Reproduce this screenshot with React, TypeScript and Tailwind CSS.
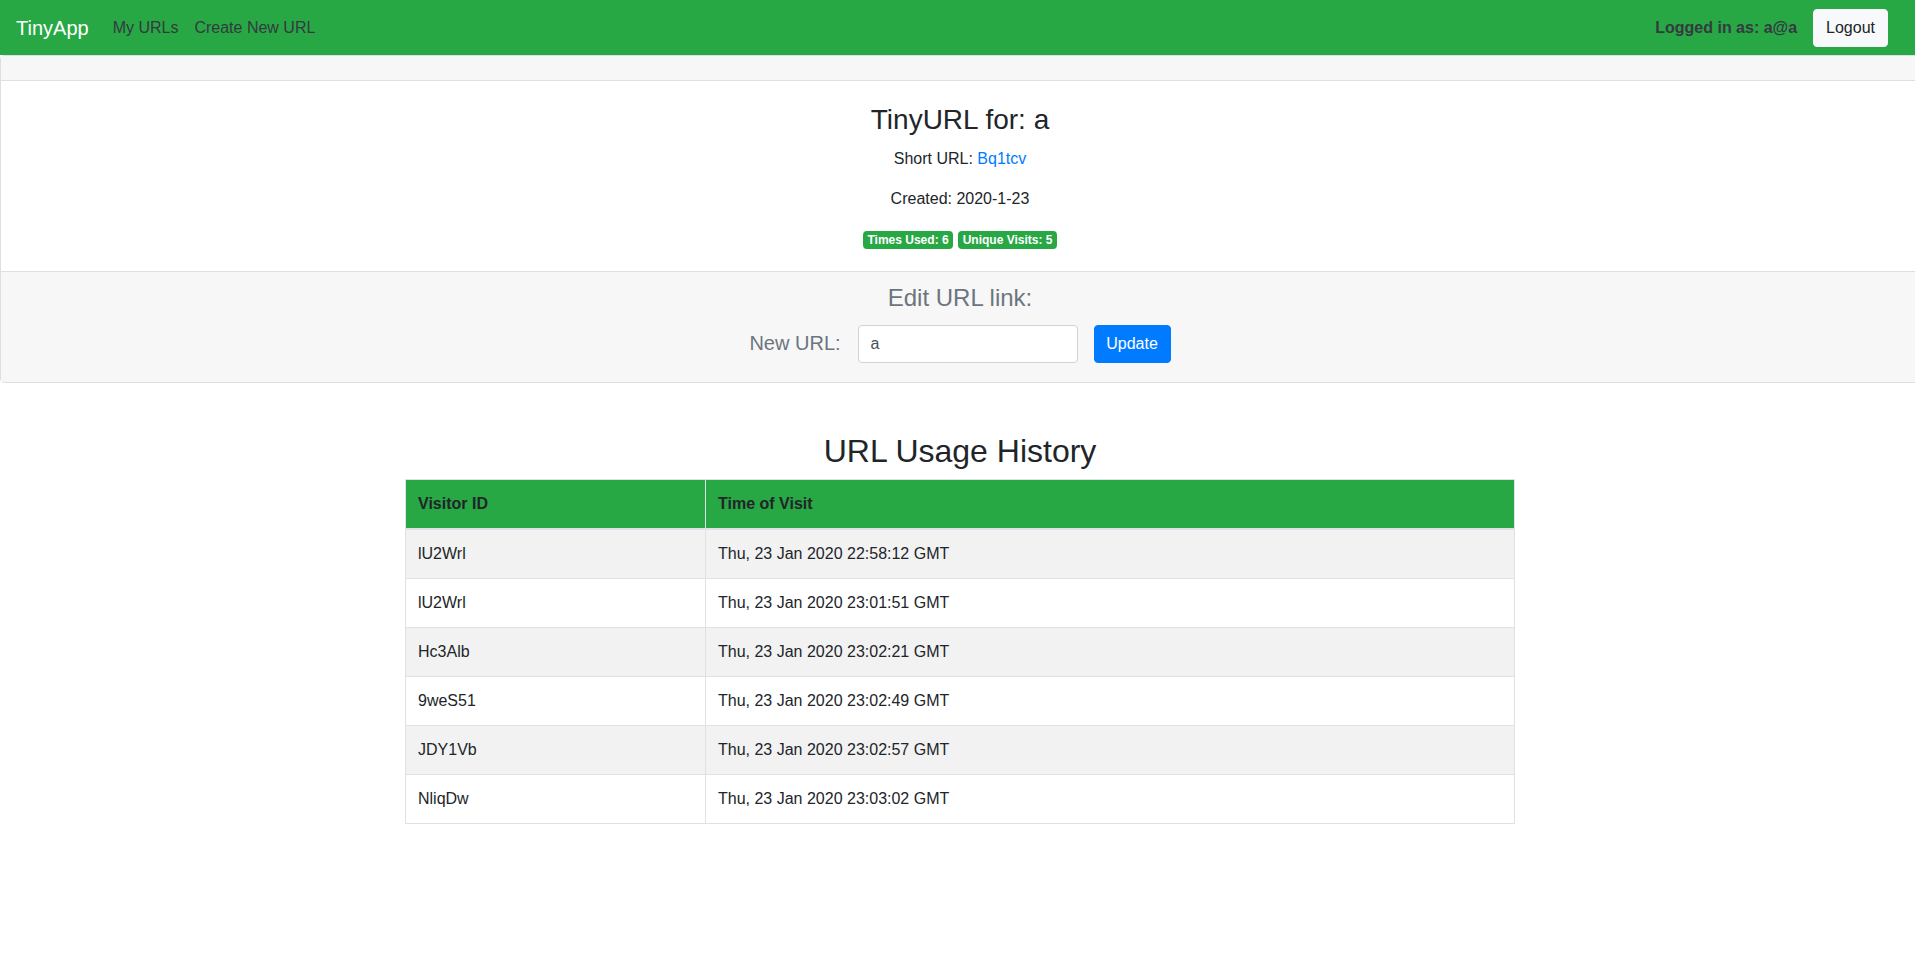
import React from "react";

const rows: [string, string][] = [
  ["lU2Wrl", "Thu, 23 Jan 2020 22:58:12 GMT"],
  ["lU2Wrl", "Thu, 23 Jan 2020 23:01:51 GMT"],
  ["Hc3Alb", "Thu, 23 Jan 2020 23:02:21 GMT"],
  ["9weS51", "Thu, 23 Jan 2020 23:02:49 GMT"],
  ["JDY1Vb", "Thu, 23 Jan 2020 23:02:57 GMT"],
  ["NliqDw", "Thu, 23 Jan 2020 23:03:02 GMT"],
];

export default function App() {
  return (
    <div className="w-full min-h-screen overflow-hidden bg-white">
      <div className="w-[1920px] font-['Liberation_Sans',Arial,sans-serif] text-[16px] leading-6 text-[#212529]">
        <nav className="h-[55px] bg-[#28a745] flex items-center pl-4 pr-8">
          <span className="text-white text-[20px] leading-[30px] mr-4">TinyApp</span>
          <a className="px-2 text-[#343a40]">My URLs</a>
          <a className="px-2 text-[#343a40]">Create New URL</a>
          <div className="ml-auto flex items-center gap-4">
            <span className="font-bold text-[#343a40]">Logged in as: a@a</span>
            <button className="h-[38px] px-3 rounded border border-[#f8f9fa] bg-[#f8f9fa] text-[#212529]">Logout</button>
          </div>
        </nav>

        <div className="border border-[#dfdfdf] rounded">
          <div className="h-[25px] bg-[#f7f7f7] border-b border-[#dfdfdf]" />
          <div className="p-5 text-center">
            <h3 className="text-[28px] leading-[1.2] mt-[2px] mb-[10px]">TinyURL for: a</h3>
            <p className="mb-4">
              Short URL: <a className="text-[#007bff]">Bq1tcv</a>
            </p>
            <p className="mb-4">Created: 2020-1-23</p>
            <p>
              <span className="inline-block px-[4.8px] py-[3px] text-[12px] font-bold leading-none rounded bg-[#28a745] text-white">
                Times Used: 6
              </span>{" "}
              <span className="inline-block px-[4.8px] py-[3px] text-[12px] font-bold leading-none rounded bg-[#28a745] text-white">
                Unique Visits: 5
              </span>
            </p>
          </div>
          <div className="bg-[#f7f7f7] border-t border-[#dfdfdf] px-5 py-3 text-center">
            <h4 className="text-[24px] leading-[1.2] mb-2 text-[#6c757d]">Edit URL link:</h4>
            <div className="flex justify-center items-start h-[50px]">
              <label className="text-[20px] leading-[30px] text-[#6c757d] mt-[8px] mr-[17px]">New URL:</label>
              <input
                defaultValue="a"
                className="w-[220px] h-[38px] mt-[5px] px-3 rounded border border-[#ced4da] bg-white text-[#495057] mr-4 outline-none"
              />
              <button className="h-[38px] w-[77px] mt-[5px] rounded border border-[#007bff] bg-[#007bff] text-white">Update</button>
            </div>
          </div>
        </div>

        <div className="mt-[49px] w-[1110px] mx-auto">
          <h2 className="text-[32px] leading-[1.2] mb-2 text-center">URL Usage History</h2>
          <table className="w-full border-collapse border border-[#dee2e6]">
            <thead>
              <tr className="bg-[#28a745]">
                <th className="w-[300px] border border-[#dee2e6] border-b-2 p-3 text-left font-bold">Visitor ID</th>
                <th className="border border-[#dee2e6] border-b-2 p-3 text-left font-bold">Time of Visit</th>
              </tr>
            </thead>
            <tbody>
              {rows.map(([id, t], i) => (
                <tr key={i} className={i % 2 === 0 ? "bg-[#f2f2f2]" : "bg-white"}>
                  <td className="border border-[#dee2e6] p-3">{id}</td>
                  <td className="border border-[#dee2e6] p-3">{t}</td>
                </tr>
              ))}
            </tbody>
          </table>
        </div>
      </div>
    </div>
  );
}
